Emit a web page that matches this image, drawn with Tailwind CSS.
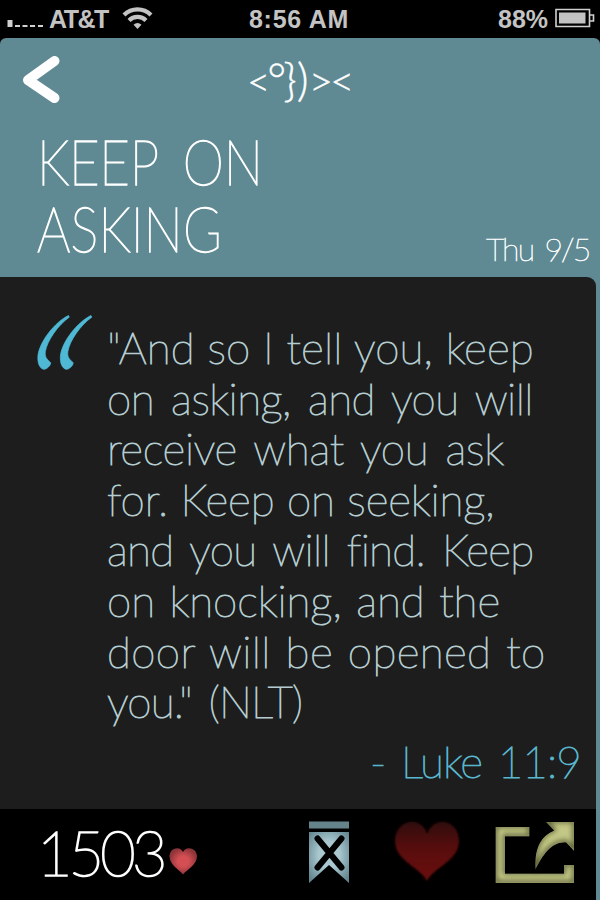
<!DOCTYPE html>
<html lang="en">
<head>
<meta charset="utf-8">
<title>Keep On Asking</title>
<script src="https://cdn.jsdelivr.net/npm/@tailwindcss/browser@4"></script>
</head>
<body class="bg-black">
<main class="w-[600px] h-[900px] overflow-hidden bg-black flex flex-col font-['Lato',sans-serif] font-extralight whitespace-nowrap">
  <div class="h-[38px] shrink-0 flex items-center text-[#c3c3c3] font-['Liberation_Sans',sans-serif] font-bold text-[25px] leading-[38px]">
    <svg class="ml-[7px] w-[38px] h-[38px] shrink-0" viewBox="0 0 38 38" fill="#d0d0d0"><path d="M.5 20h5v7h-5zM8 25h5v2H8zM15.500 25h5v2h-5zM23 25h5v2h-5zM31 25h5v2h-5z"/></svg>
    <span class="ml-[4px] w-[59px]"><span data-fit="59">AT&amp;T</span></span>
    <svg class="ml-[14px] w-[31px] h-[38px] shrink-0" viewBox="0 0 31 38" fill="none" stroke="#c3c3c3" stroke-width="4.200"><path d="M2 15a19 19 0 0 1 27 0M7 20.500a12 12 0 0 1 17 0"/><path d="M15.500 29l-4-4.200q4-3.500 8 0z" fill="#c3c3c3" stroke="none"/></svg>
    <span class="ml-[96px] w-[99px]"><span data-fit="100">8:56 AM</span></span>
    <span class="ml-[150px] w-[50px]"><span data-fit="50">88%</span></span>
    <svg class="ml-[7px] w-[41px] h-[38px] shrink-0" viewBox="0 0 41 38"><path d="M1 9.500h33.500v17H1z" fill="none" stroke="#d0d0d0" stroke-width="1.600"/><path d="M4 12.500h26.500v11H4z" fill="#c3c3c3"/><path d="M35 15h3.500v6H35" fill="none" stroke="#d0d0d0" stroke-width="1.600"/></svg>
  </div>
  <div class="h-[862px] shrink-0 rounded-t-[6px] bg-[#5f8a93] flex flex-col">
    <header class="h-[239px] shrink-0 flex flex-col text-white">
      <div class="h-[89px] shrink-0 flex">
        <svg class="ml-[20px] w-[44px] h-[89px] shrink-0" viewBox="20 38 44 89"><path d="M54.500 61L28 80l26.500 18" fill="none" stroke="#fff" stroke-width="10" stroke-linecap="round" stroke-linejoin="round"/></svg>
        <div class="ml-[183px] w-[104px] text-[46px] leading-[82px] font-light [-webkit-text-stroke:0.4px_currentColor]"><span class="text-[40px]" data-fit="20">&lt;</span><span data-fit="16">°</span><span data-fit="14">}</span><span data-fit="12">)</span><span class="text-[42px]" data-fit="21">&gt;</span><span class="text-[42px]" data-fit="21">&lt;</span></div>
      </div>
      <div class="flex items-end h-[150px] pl-[37px] pr-[11px]">
        <h1 class="w-[449px] shrink-0 h-[149px] origin-left scale-x-[0.86] text-[61px] leading-[67.300px] [word-spacing:12px] [-webkit-text-stroke:1.4px_currentColor]"><span data-fit="263">KEEP ON</span><br><span data-fit="215">ASKING</span></h1>
        <div class="pb-[6px] text-[32px] leading-[44px] [word-spacing:4px] [-webkit-text-stroke:0.7px_currentColor]"><span data-fit="103">Thu 9/5</span></div>
      </div>
    </header>
    <section class="w-[596px] h-[532px] shrink-0 rounded-tr-[9px] bg-[#1d1d1d] flex flex-col">
      <div class="flex pt-[45px] h-[459px] shrink-0">
        <svg class="ml-[36px] -mt-[9px] w-[58px] h-[60px] shrink-0" viewBox="36 313 58 60"><g fill="#4fb9d5" stroke="#4fb9d5" stroke-width=".7"><path id="mark" d="M68.500 315.500C55 322 40 341 38 355c-.8 8 1.500 13 5.500 14.300 3 .2 7-3.300 7.200-6.600-4.500-4-6-6.200-5.300-11.200C47 341 58 325 69.300 317.200z"/><use href="#mark" x="22.500"/></g></svg>
        <p class="ml-[13px] text-[44px] leading-[50.600px] [word-spacing:5px] text-[#b4ccd0] [-webkit-text-stroke:1.1px_currentColor]"><span class="[word-spacing:0px]" data-fit="427">"And so I tell you, keep</span><br><span data-fit="426">on asking, and you will</span><br><span data-fit="397">receive what you ask</span><br><span class="[word-spacing:0px]" data-fit="388">for. Keep on seeking,</span><br><span class="[word-spacing:5px]" data-fit="425">and you will find. Keep</span><br><span class="[word-spacing:2px]" data-fit="393">on knocking, and the</span><br><span class="[word-spacing:2px]" data-fit="439">door will be opened to</span><br><span data-fit="195">you." (NLT)</span></p>
      </div>
      <div class="pl-[370px] text-[44px] leading-[50px] [word-spacing:4px] text-[#59b6cc] [-webkit-text-stroke:1.1px_currentColor]"><span data-fit="211">- Luke 11:9</span></div>
    </section>
    <footer class="w-[596px] h-[91px] shrink-0 bg-black flex items-start">
      <div class="ml-[37px] w-[127px] text-[61px] leading-[88px] text-white [-webkit-text-stroke:1.700px_currentColor]"><span data-fit="127">1503</span></div>
      <svg class="w-[40px] h-[91px] shrink-0" viewBox="164 809 40 91"><defs><radialGradient id="small"><stop offset=".4" stop-color="#d34f53"/><stop offset="1" stop-color="#8e3439"/></radialGradient><filter id="s1"><feGaussianBlur stdDeviation=".6"/></filter></defs><path filter="url(#s1)" fill="url(#small)" d="M183 874.500c-4-5-13.500-10-13.500-18 0-9 11-11 13.500-4.500 2.500-6.500 14-4.500 14 4.500 0 8-10 13-14 18z"/></svg>
      <svg class="ml-[101px] w-[50px] h-[91px] shrink-0" viewBox="305 809 50 91"><defs><radialGradient id="ribbon" cy=".45" r=".65"><stop offset=".4" stop-color="#a9c8d0"/><stop offset="1" stop-color="#63858f"/></radialGradient></defs><path fill="#64838b" d="M309 821.500h40v7h-40z"/><path fill="url(#ribbon)" d="M309 832h40v51l-20-18-20 18z"/><path d="M317.500 838.500l24 29M341.500 838.500l-24 29" stroke="#000" stroke-width="6" stroke-linecap="round"/></svg>
      <svg class="ml-[35px] w-[74px] h-[91px] shrink-0" viewBox="390 809 74 91"><defs><linearGradient id="big" x2="0" y2="1"><stop stop-color="#300808"/><stop offset=".45" stop-color="#580c0e"/><stop offset="1" stop-color="#6c0b0d"/></linearGradient><filter id="s2"><feGaussianBlur stdDeviation="1.200"/></filter></defs><path filter="url(#s2)" fill="url(#big)" d="M427 881c-7-14-32-20-32-40 0-22 27-26 32-7 6-19 32-15 32 7 0 20-25 26-32 40z"/></svg>
      <svg class="ml-[28px] w-[88px] h-[91px] shrink-0" viewBox="492 809 88 91"><defs><filter id="s3"><feGaussianBlur stdDeviation="2.500"/></filter><clipPath id="box"><path id="share" d="M495.500 827h34v9.500H505V873.500h59V865h10v18h-78.500zM546 822h28v29l-8-8.500c-14-1-23 12-30.500 27C534 850 540 836 554 830.500z"/></clipPath></defs><g clip-path="url(#box)"><use href="#share" fill="#c3c887"/><use href="#share" fill="none" stroke="#333619" stroke-width="2.600" filter="url(#s3)" y="-1"/></g></svg>
    </footer>
  </div>
</main>
<script>
  // Spread each line's letters so that it fills its set width.
  function fitLines() {
    document.querySelectorAll('[data-fit]').forEach(el => {
      el.style.letterSpacing = '0px';
      const gap = (el.dataset.fit - el.offsetWidth) / el.textContent.length;
      el.style.letterSpacing = gap + 'px';
    });
  }
  fitLines();
  window.addEventListener('load', () => { fitLines(); document.fonts.ready.then(fitLines); });
</script>
</body>
</html>
